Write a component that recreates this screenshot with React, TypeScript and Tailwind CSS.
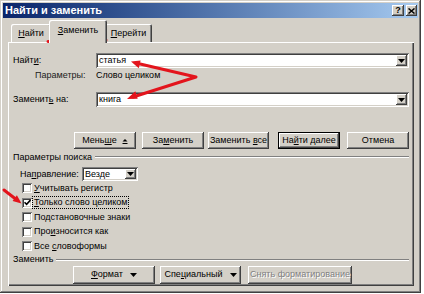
import React from "react";

// classic 3d frames
const raised =
  "bg-[#d4d0c8] shadow-[inset_-1px_-1px_0_#404040,inset_1px_1px_0_#ffffff,inset_-2px_-2px_0_#808080,inset_2px_2px_0_#d4d0c8]";
const sunken =
  "bg-white shadow-[inset_1px_1px_0_#808080,inset_-1px_-1px_0_#ffffff,inset_2px_2px_0_#404040,inset_-2px_-2px_0_#d4d0c8]";

function U({ children }: { children: React.ReactNode }) {
  return <span className="underline decoration-1 underline-offset-1">{children}</span>;
}

function DownArrow() {
  return (
    <svg width="7" height="4" viewBox="0 0 7 4">
      <path d="M0 0h7L3.5 4z" fill="#000" />
    </svg>
  );
}

function ComboBtn() {
  return (
    <div className={`${raised} w-[11px] h-full flex items-center justify-center`}>
      <DownArrow />
    </div>
  );
}

function Btn({
  className = "",
  children,
  def,
}: {
  className?: string;
  children: React.ReactNode;
  def?: boolean;
}) {
  return (
    <div
      className={`${raised} flex items-center justify-center shrink-0 ${def ? "border border-black" : ""} ${className}`}
    >
      {children}
    </div>
  );
}

function Separator({ label }: { label: string }) {
  return (
    <div className="flex items-center h-[12px]">
      <span>{label}</span>
      <div className="flex-1 ml-[3px] border-t border-t-[#808080] border-b border-b-white" />
    </div>
  );
}

function Check({
  checked,
  focus,
  children,
}: {
  checked?: boolean;
  focus?: boolean;
  children: React.ReactNode;
}) {
  return (
    <div className="flex items-center h-[14.5px] pl-[9px]">
      <div className={`${sunken} w-[10px] h-[10px] flex items-center justify-center`}>
        {checked && (
          <svg width="7" height="7" viewBox="0 0 7 7">
            <path d="M0.5 3.2 L2.6 5.4 L6.5 1" stroke="#000" strokeWidth="1.6" fill="none" />
          </svg>
        )}
      </div>
      <span
        className={`px-[1px] leading-[11px] border border-dotted ${focus ? "border-black" : "border-transparent"}`}
      >
        {children}
      </span>
    </div>
  );
}

function Annotations() {
  return (
    <svg className="absolute left-0 top-0 pointer-events-none" width="424" height="294" viewBox="0 0 424 294">
      <g stroke="#e3141c" strokeLinecap="round" strokeLinejoin="round" fill="none">
        <path d="M48 41.5 Q76 40 106 40" strokeWidth="3" />
        <path d="M138 63.5 L196 77 L133 97" strokeWidth="3" />
        <path d="M4 190 L15 198.5" strokeWidth="3" />
      </g>
      <g fill="#e3141c">
        <path d="M131 61.5 L140.6 60.4 L138.8 68.2 Z" />
        <path d="M127 99 L135.3 91.2 L137.7 98.8 Z" />
        <path d="M21.5 203.5 L12.6 201 L16.9 195.2 Z" />
      </g>
    </svg>
  );
}

export default function App() {
  return (
    <div className="relative w-[424px] h-[294px] bg-white text-black text-[9px] leading-none font-['Liberation_Sans',Arial,sans-serif]">
      <div className="w-[421px] h-[293px] bg-[#d4d0c8] p-[3px] flex flex-col shadow-[inset_-1px_-1px_0_#404040,inset_1px_1px_0_#d4d0c8,inset_-2px_-2px_0_#808080,inset_2px_2px_0_#ffffff]">
        {/* title bar */}
        <div className="h-[15px] flex items-center justify-between pl-[2px] pr-[1px] bg-gradient-to-r from-[#0a246a] to-[#a6caf0]">
          <span className="text-white font-bold text-[11px]">Найти и заменить</span>
          <div className="flex gap-[2px] h-[11px]">
            <div className={`${raised} w-[12px] flex items-center justify-center font-bold text-[9px]`}>?</div>
            <div className={`${raised} w-[11px] flex items-center justify-center`}>
              <svg width="7" height="6" viewBox="0 0 7 6">
                <path d="M0.5 0.5 L6.5 5.5 M6.5 0.5 L0.5 5.5" stroke="#000" strokeWidth="1.5" />
              </svg>
            </div>
          </div>
        </div>

        <div className="flex-1 flex flex-col pl-[5px] pr-[4px] pb-[4px]">
          {/* tabs */}
          <div className="h-[24px] flex items-end pl-[3px]">
            <div className="h-[18px] w-[40px] flex items-center justify-center rounded-t-[2px] shadow-[inset_1px_1px_0_#ffffff,inset_-1px_0_0_#404040,inset_-2px_0_0_#808080]">
              <span><U>Н</U>айти</span>
            </div>
            <div className="relative z-10 -mb-[1px] -mx-[2px] h-[23px] w-[58px] bg-[#d4d0c8] flex items-center justify-center pb-[2px] rounded-t-[2px] shadow-[inset_1px_1px_0_#ffffff,inset_-1px_0_0_#404040,inset_-2px_0_0_#808080]">
              <span><U>З</U>аменить</span>
            </div>
            <div className="h-[18px] w-[47px] flex items-center justify-center rounded-t-[2px] shadow-[inset_1px_1px_0_#ffffff,inset_-1px_0_0_#404040,inset_-2px_0_0_#808080]">
              <span><U>П</U>ерейти</span>
            </div>
          </div>

          {/* panel */}
          <div className="flex-1 flex flex-col px-[5px] shadow-[inset_1px_1px_0_#ffffff,inset_-1px_-1px_0_#404040,inset_-2px_-2px_0_#808080]">
            <div className="mt-[11px] h-[15px] flex items-center">
              <span className="w-[83px]">
                Найт<U>и</U>:
              </span>
              <div className={`${sunken} flex-1 h-full flex items-center pl-[3px] pr-[2px] py-[2px]`}>
                <span className="flex-1">статья</span>
                <ComboBtn />
              </div>
            </div>
            <div className="mt-[1px] h-[12px] flex items-center">
              <span className="w-[83px] pl-[22px] text-[#202020]">Параметры:</span>
              <span>Слово целиком</span>
            </div>
            <div className="mt-[11px] h-[15px] flex items-center">
              <span className="w-[83px]">
                Заменит<U>ь</U> на:
              </span>
              <div className={`${sunken} flex-1 h-full flex items-center pl-[3px] pr-[2px] py-[2px]`}>
                <span className="flex-1">книга</span>
                <ComboBtn />
              </div>
            </div>

            {/* main buttons */}
            <div className="mt-[25px] h-[17px] flex pl-[61px]">
              <Btn className="w-[62px] h-full gap-[5px]">
                <span>
                  Мень<U>ш</U>е
                </span>
                <svg width="6" height="6" viewBox="0 0 6 6">
                  <path d="M0.5 3.5 L3 1 L5.5 3.5 Z" fill="#000" />
                  <path d="M0.5 5.5 H5.5" stroke="#000" strokeWidth="1" />
                </svg>
              </Btn>
              <Btn className="ml-[6px] w-[62px] h-full">
                <span>
                  За<U>м</U>енить
                </span>
              </Btn>
              <Btn className="ml-[4px] w-[61px] h-full">
                <span>
                  Заменить <U>в</U>се
                </span>
              </Btn>
              <Btn def className="ml-[9px] w-[62px] h-full">
                <span>
                  На<U>й</U>ти далее
                </span>
              </Btn>
              <Btn className="ml-[7px] w-[62px] h-full">
                <span>Отмена</span>
              </Btn>
            </div>

            <div className="mt-[2px]">
              <Separator label="Параметры поиска" />
            </div>

            <div className="mt-[4px] h-[14px] flex items-center pl-[7px]">
              <span className="w-[62px]">
                На<U>п</U>равление:
              </span>
              <div className={`${sunken} w-[56px] h-full flex items-center pl-[3px] pr-[2px] py-[2px]`}>
                <span className="flex-1">Везде</span>
                <ComboBtn />
              </div>
            </div>

            <div className="flex flex-col">
              <Check>
                <U>У</U>читывать регистр
              </Check>
              <Check checked focus>
                <U>Т</U>олько слово целиком
              </Check>
              <Check>
                По<U>д</U>становочные знаки
              </Check>
              <Check>
                Про<U>и</U>зносится как
              </Check>
              <Check>
                Все <U>с</U>ловоформы
              </Check>
            </div>

            <Separator label="Заменить" />

            {/* format buttons */}
            <div className="h-[18px] flex pl-[60px]">
              <Btn className="w-[82px] h-full gap-[7px]">
                <span>
                  <U>Ф</U>ормат
                </span>
                <DownArrow />
              </Btn>
              <Btn className="ml-[5px] w-[81px] h-full gap-[7px]">
                <span>
                  Спе<U>ц</U>иальный
                </span>
                <DownArrow />
              </Btn>
              <Btn className="ml-[7px] w-[104px] h-full">
                <span className="text-[#808080] [text-shadow:1px_1px_0_#ffffff]">Снять форматирование</span>
              </Btn>
            </div>
          </div>
        </div>
      </div>
      <Annotations />
    </div>
  );
}
